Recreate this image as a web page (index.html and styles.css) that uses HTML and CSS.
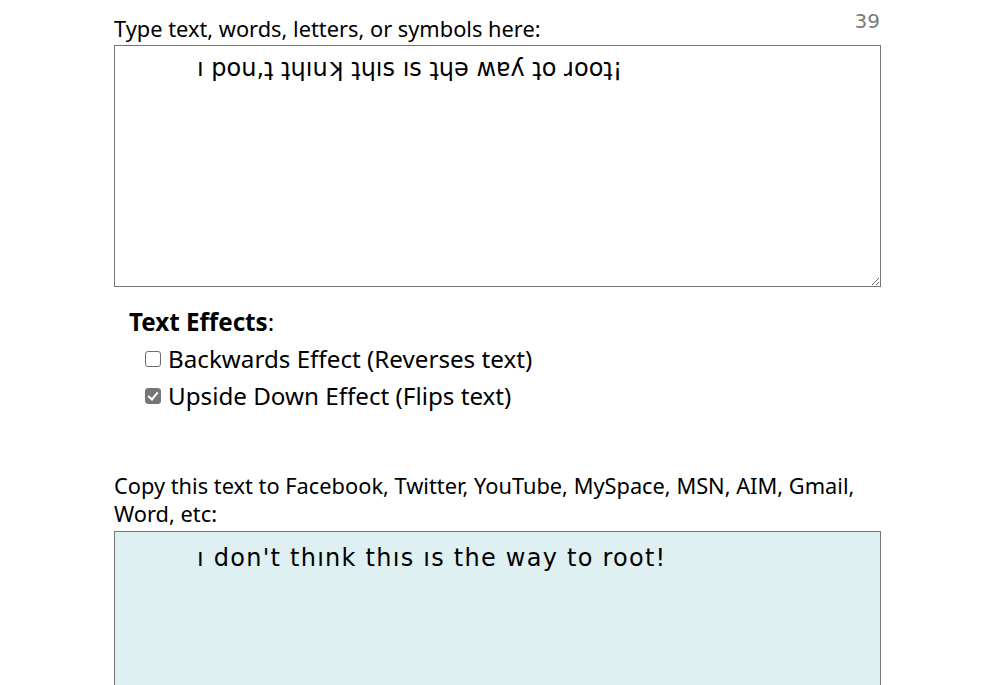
FILE: index.html
```html
<!DOCTYPE html>
<html lang="en">
<head>
<meta charset="utf-8">
<title>Upside Down Text</title>
<link rel="stylesheet" href="styles.css">
</head>
<body>
<div class="page">
  <div class="head">
    <label class="field-label" for="src">Type text, words, letters, or symbols here:</label>
    <span class="count">39</span>
  </div>
  <textarea id="src" class="box box-input">ı pou,ʇ ʇɥıuʞ ʇɥıs ıs ʇɥǝ ʍɐʎ ʇo ɹooʇ¡</textarea>

  <div class="effects">
    <div class="effects-title"><b>Text Effects</b>:</div>
    <label class="opt"><input type="checkbox" class="chk">Backwards Effect (Reverses text)</label>
    <label class="opt"><input type="checkbox" class="chk" checked>Upside Down Effect (Flips text)</label>
  </div>

  <label class="field-label copy-label" for="out">Copy this text to Facebook, Twitter, YouTube, MySpace, MSN, AIM, Gmail, Word, etc:</label>
  <textarea id="out" class="box box-output">ı don't thınk thıs ıs the way to root!</textarea>
</div>
</body>
</html>
```

FILE: styles.css
```css
html, body {
  margin: 0;
  padding: 0;
  background: #ffffff;
}
body {
  font-family: "Noto Sans", "Open Sans", sans-serif;
  color: #000;
}
.page {
  width: 767px;
  margin-left: 114px;
  display: flex;
  flex-direction: column;
}
.head {
  display: flex;
  justify-content: space-between;
  align-items: flex-start;
  padding-top: 9px;
}
.field-label {
  font-size: 21.8px;
  line-height: 28px;
  padding-top: 6px;
  display: block;
}
.count {
  font-family: "DejaVu Sans", sans-serif;
  font-size: 20px;
  color: #7a7a7a;
  line-height: 24px;
  padding-right: 1px;
}
.box {
  box-sizing: border-box;
  width: 767px;
  border: 1px solid #767676;
  font-family: "DejaVu Sans", sans-serif;
  font-size: 24px;
  line-height: 28px;
  padding: 8px 10px 10px 82px;
  margin: 0;
  color: #000;
  display: block;
}
.box-input {
  height: 242px;
  margin-top: 2px;
  background: #fff;
}
.box-output {
  height: 200px;
  padding-top: 12px;
  letter-spacing: 1.25px;
  background: #dff0f3;
}
.effects {
  padding: 16px 0 0 15px;
  font-size: 24.2px;
  line-height: 37px;
  height: 185px;
  box-sizing: border-box;
}
.opt {
  display: flex;
  align-items: center;
  padding-left: 16px;
}
.chk {
  appearance: none;
  -webkit-appearance: none;
  box-sizing: border-box;
  width: 16px;
  height: 16px;
  margin: 0 7px 0 0;
  border: 1px solid #6d6d6d;
  border-radius: 3px;
  background: #fff;
  flex: none;
  position: relative;
}
.chk:checked {
  background: #767676;
  border-color: #767676;
}
.chk:checked::after {
  content: "";
  position: absolute;
  left: 4px;
  top: 1px;
  width: 4px;
  height: 8px;
  border: solid #fff;
  border-width: 0 2.5px 2.5px 0;
  transform: rotate(40deg);
}
.copy-label {
  padding-top: 0;
  margin-bottom: 3px;
}
```
